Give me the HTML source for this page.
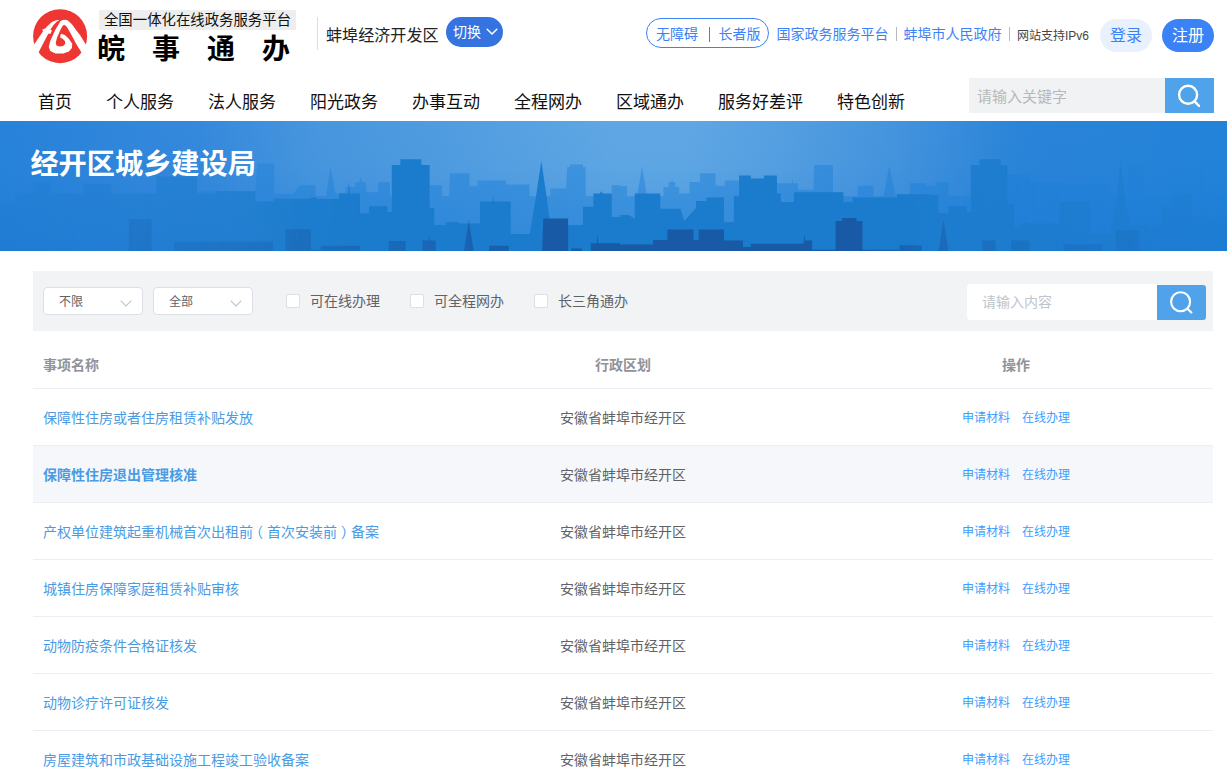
<!DOCTYPE html>
<html lang="zh-CN">
<head>
<meta charset="utf-8">
<title>经开区城乡建设局</title>
<style>
*{box-sizing:border-box;margin:0;padding:0}
html,body{width:1227px;height:776px;overflow:hidden;background:#fff}
body{font-family:"Liberation Sans","Noto Sans CJK SC",sans-serif;color:#333;position:relative}
.abs{position:absolute;white-space:nowrap}
a{text-decoration:none;color:inherit}

/* header */
#logo{left:30px;top:6px;width:60px;height:60px}
#slogan{left:99px;top:10px;width:197px;height:20px;background:#eee;font-size:14.4px;line-height:21px;color:#111;text-align:center}
#brand{left:97px;top:32px;font-size:28px;font-weight:700;line-height:36px;color:#000;letter-spacing:27px}
#vdiv{left:317px;top:17px;width:1px;height:33px;background:#ddd}
#area{left:326px;top:23px;font-size:16.1px;line-height:24px;color:#222}
#switch{left:446px;top:17px;width:57px;height:30px;border-radius:15px;background:#3573e0;color:#fff;font-size:14px;line-height:31px;padding-left:7px}
#acc{left:646px;top:18px;width:123px;height:30px;border:1px solid #3b82f6;border-radius:15px}
.acct{top:24px;font-size:14px;line-height:20px;color:#3b82f6}
#accbar{left:709px;top:27px;width:1px;height:15px;background:#3b82f6}
.tl{top:24px;font-size:14px;line-height:20px;color:#3b82f6}
#ipv6{left:1017px;top:26px;font-size:12px;line-height:20px;color:#444}
.sep{top:27px;width:1px;height:14px;background:#bbb}
#login{left:1100px;top:19px;width:52px;height:33px;border-radius:17px;background:#e8f1fd;color:#3b82f6;font-size:16px;line-height:34px;text-align:center}
#reg{left:1162px;top:19px;width:52px;height:33px;border-radius:17px;background:#3b82f6;color:#fff;font-size:16px;line-height:34px;text-align:center}
.nav{top:90px;font-size:17px;line-height:26px;color:#111}
#hs{left:969px;top:78px;width:196px;height:35px;background:#f1f2f3;color:#b8b8b8;font-size:15px;line-height:38px;padding-left:8px}
#hsb{left:1165px;top:78px;width:49px;height:35px;background:#4ea3ea}

/* banner */
#banner{left:0;top:121px;width:1227px;height:130px;background:linear-gradient(90deg,#1f7bd8 0%,#3d8fdc 30%,#5aa4e2 50%,#3f90dd 70%,#2380d8 100%);overflow:hidden}
#btitle{left:30.4px;top:144px;font-size:28.2px;font-weight:700;line-height:40px;color:#fff}

/* filter */
#filter{left:33px;top:271px;width:1180px;height:60px;background:#f2f3f5}
.sel{top:287px;width:100px;height:28px;background:#fff;border:1px solid #dcdfe6;border-radius:4px;font-size:12px;line-height:28px;color:#606266;padding-left:15px}
.cb{top:294px;width:14px;height:14px;background:#fff;border:1px solid #dcdfe6;border-radius:2px}
.cbl{top:291px;font-size:14px;line-height:20px;color:#606266}
#fs{left:967px;top:284px;width:190px;height:36px;background:#fff;border-radius:4px 0 0 4px;color:#c0c4cc;font-size:14px;line-height:37px;padding-left:15px}
#fsb{left:1157px;top:285px;width:49px;height:35px;background:#50a3ea;border-radius:0 3px 3px 0}

.chev{left:76px;top:12px}
/* table */
.th{top:355px;font-size:14px;font-weight:700;line-height:20px;color:#909399}
.row{left:33px;width:1180px;height:57px;border-top:1px solid #ebeef5}
.row.hov{background:#f5f7fa}
.c1{left:10px;top:19px;font-size:14px;line-height:20px;color:#4a9be3}
.c2{left:527px;top:19px;font-size:14px;line-height:20px;color:#606266}
.c3{left:929px;top:20px;font-size:12px;line-height:18px;color:#409eff}
.c4{left:989px;top:20px;font-size:12px;line-height:18px;color:#409eff}
</style>
</head>
<body>

<!-- HEADER -->
<svg id="logo" class="abs" viewBox="0 0 60 60" width="60" height="60">
<circle cx="30.1" cy="30.15" r="27" fill="#ee3632"/>
<g><g transform="translate(10,9) scale(0.051546)" fill="#fff">
<polygon points="352,97 300,105 230,135 160,200 100,262 38,285 62,312 -111,568 -170,660 -60,790 -21,712 160,362 205,362 232,295 200,285 262,195 330,125 374,100"/>
<polygon points="440,95 400,115 300,280 200,500 170,620 200,700 300,745 450,745 560,710 620,640 625,560 560,460 480,390 410,365 393,400 395,440 440,460 485,510 490,560 450,600 380,610 320,590 305,540 330,440 400,280 440,210 470,190 520,230 600,370 700,560 796,711 840,780 960,640 886,568 776,390 700,290 620,180 540,108 500,90"/>
</g></g>
</svg>
<div id="slogan" class="abs">全国一体化在线政务服务平台</div>
<div id="brand" class="abs">皖事通办</div>
<div id="vdiv" class="abs"></div>
<div id="area" class="abs">蚌埠经济开发区</div>
<div id="switch" class="abs">切换<svg class="abs" style="left:40px;top:11px" width="12" height="8" viewBox="0 0 12 8"><path d="M1.2 1.2 L6 6 L10.8 1.2" fill="none" stroke="#fff" stroke-width="1.5" stroke-linecap="round" stroke-linejoin="round"/></svg></div>
<div id="acc" class="abs"></div><a class="abs acct" style="left:656px">无障碍</a><div id="accbar" class="abs"></div><a class="abs acct" style="left:718.5px">长者版</a>
<a class="abs tl" style="left:776.5px">国家政务服务平台</a>
<div class="abs sep" style="left:896px"></div>
<a class="abs tl" style="left:903.5px">蚌埠市人民政府</a>
<div class="abs sep" style="left:1009px"></div>
<div id="ipv6" class="abs">网站支持IPv6</div>
<div id="login" class="abs">登录</div>
<div id="reg" class="abs">注册</div>

<a class="abs nav" style="left:38px">首页</a>
<a class="abs nav" style="left:106px">个人服务</a>
<a class="abs nav" style="left:208px">法人服务</a>
<a class="abs nav" style="left:310px">阳光政务</a>
<a class="abs nav" style="left:412px">办事互动</a>
<a class="abs nav" style="left:514px">全程网办</a>
<a class="abs nav" style="left:616px">区域通办</a>
<a class="abs nav" style="left:718px">服务好差评</a>
<a class="abs nav" style="left:837px">特色创新</a>
<div id="hs" class="abs">请输入关键字</div>
<div id="hsb" class="abs"><svg class="abs" style="left:0;top:0" width="49" height="35" viewBox="0 0 49 35"><circle cx="23.1" cy="16.8" r="9" fill="none" stroke="#fff" stroke-width="2.4"/><path d="M29.8 23.6 L34 27.9" stroke="#fff" stroke-width="2.4" stroke-linecap="round"/></svg></div>

<!-- BANNER -->
<div id="banner" class="abs"><svg class="abs" style="left:0;top:0" width="1227" height="130" viewBox="0 0 1227 130">
<defs>
<linearGradient id="sky" x1="0" y1="0" x2="1" y2="0">
<stop offset="0" stop-color="#2782d9"/><stop offset="0.163" stop-color="#3589dc"/><stop offset="0.26" stop-color="#4796de"/><stop offset="0.36" stop-color="#509ce0"/><stop offset="0.5" stop-color="#5fa7e4"/><stop offset="0.56" stop-color="#5fa7e4"/><stop offset="0.635" stop-color="#559fe1"/><stop offset="0.733" stop-color="#4393dd"/><stop offset="0.83" stop-color="#2a84d8"/><stop offset="1" stop-color="#2283d8"/>
</linearGradient>
<linearGradient id="vd" x1="0" y1="0" x2="0" y2="1">
<stop offset="0" stop-color="#1470cf" stop-opacity="0"/><stop offset="0.35" stop-color="#1470cf" stop-opacity="0.03"/><stop offset="1" stop-color="#1470cf" stop-opacity="0.3"/>
</linearGradient>
<linearGradient id="fade" x1="0" y1="0" x2="1" y2="0">
<stop offset="0" stop-color="#fff" stop-opacity="0.25"/><stop offset="0.12" stop-color="#fff" stop-opacity="0.45"/><stop offset="0.2" stop-color="#fff" stop-opacity="0.7"/><stop offset="0.25" stop-color="#fff" stop-opacity="0.95"/><stop offset="0.3" stop-color="#fff" stop-opacity="1"/><stop offset="0.73" stop-color="#fff" stop-opacity="1"/><stop offset="0.8" stop-color="#fff" stop-opacity="0.85"/><stop offset="0.86" stop-color="#fff" stop-opacity="0.7"/><stop offset="0.92" stop-color="#fff" stop-opacity="0.5"/><stop offset="1" stop-color="#fff" stop-opacity="0.25"/>
</linearGradient>
<linearGradient id="fade2" x1="0" y1="0" x2="1" y2="0">
<stop offset="0" stop-color="#fff" stop-opacity="0.12"/><stop offset="0.2" stop-color="#fff" stop-opacity="0.3"/><stop offset="0.25" stop-color="#fff" stop-opacity="0.4"/><stop offset="0.33" stop-color="#fff" stop-opacity="0.55"/><stop offset="0.4" stop-color="#fff" stop-opacity="0.8"/><stop offset="0.45" stop-color="#fff" stop-opacity="1"/><stop offset="0.7" stop-color="#fff" stop-opacity="1"/><stop offset="0.76" stop-color="#fff" stop-opacity="0.5"/><stop offset="0.85" stop-color="#fff" stop-opacity="0.25"/><stop offset="1" stop-color="#fff" stop-opacity="0.1"/>
</linearGradient>
<mask id="fm2"><rect width="1227" height="130" fill="url(#fade2)"/></mask>
<mask id="fm"><rect width="1227" height="130" fill="url(#fade)"/></mask>
</defs>
<rect width="1227" height="130" fill="url(#sky)"/><rect width="1227" height="130" fill="url(#vd)"/>
<g mask="url(#fm)">
<path fill="#1a7fd8" fill-opacity="0.45" d="M0.0,131 L0.0,80.4 L15.2,80.4 L15.2,72.8 L32.8,72.8 L32.8,63.2 L50.5,63.2 L50.5,72.8 L83.4,72.8 L83.4,64.0 L111.2,64.0 L111.2,72.8 L156.6,72.8 L156.6,72.8 L197.1,72.8 L197.1,70.3 L255.2,70.3 L257.7,42.5 L274.1,42.5 L274.1,72.8 L293.1,72.8 L300.0,64.3 L315.6,64.3 L315.6,75.2 L326.1,75.2 L326.1,75.2 L330.5,45.3 L335.2,72.6 L335.2,72.6 L345.6,72.6 L345.6,66.1 L347.7,66.1 L348.3,62.2 L349.6,66.1 L349.6,66.1 L355.3,66.1 L355.3,60.9 L359.5,60.9 L360.5,55.7 L361.6,60.9 L361.6,60.9 L365.7,60.9 L366.5,71.3 L378.2,71.3 L378.2,60.9 L390.0,60.9 L390.0,75.2 L429.6,75.2 L429.6,64.3 L442.1,64.3 L442.1,75.2 L449.2,75.2 L450.0,52.3 L469.5,52.3 L469.5,65.3 L477.4,65.3 L477.4,59.6 L506.1,59.6 L506.1,63.5 L529.5,63.5 L529.5,75.2 L550.4,75.2 L550.4,67.4 L566.0,67.4 L567.3,46.0 L570.0,46.0 L570.0,43.4 L583.0,43.4 L583.0,46.0 L585.6,46.0 L585.6,75.2 L611.7,75.2 L611.7,64.3 L620.0,64.3 L620.0,65.3 L627.0,65.3 L627.0,75.2 L637.4,75.2 L637.4,73.2 L642.1,45.3 L646.5,73.2 L646.5,75.2 L663.5,75.2 L663.5,66.1 L668.7,66.1 L668.7,60.9 L671.6,60.9 L672.1,56.5 L672.6,60.9 L672.6,60.9 L675.2,60.9 L675.2,66.1 L679.1,66.1 L679.1,72.6 L689.6,72.6 L689.6,60.9 L700.0,60.9 L700.0,52.3 L715.6,52.3 L715.6,64.8 L724.8,64.8 L724.8,59.6 L739.1,59.6 L739.1,75.2 L776.9,75.2 L776.9,62.2 L792.1,62.2 L792.6,57.0 L793.1,62.2 L793.1,62.2 L797.8,62.2 L797.8,68.7 L813.4,68.7 L814.2,43.9 L833.0,43.9 L833.0,75.2 L857.8,75.2 L857.8,64.8 L873.4,64.8 L873.4,75.2 L883.9,75.2 L883.9,73.9 L889.1,45.3 L895.6,73.9 L895.6,75.2 L909.9,75.2 L909.9,62.2 L925.6,62.2 L925.6,62.2 L925.6,62.2 L925.6,64.8 L935.7,64.8 L935.7,60.9 L948.7,60.9 L948.7,75.2 L970.9,75.2 L1007.4,53.1 L1029.6,53.1 L1029.6,60.9 L1063.5,60.9 L1063.5,63.5 L1110.4,63.5 L1110.4,75.2 L1128.7,75.2 L1128.7,45.3 L1144.4,45.3 L1144.4,75.2 L1170.4,75.2 L1170.4,62.2 L1183.5,62.2 L1183.5,75.2 L1199.1,75.2 L1199.1,45.3 L1204.3,45.3 L1204.3,75.2 L1227.0,75.2 L1227.0,131Z"/>
<path fill="#1b7bcc" d="M0.0,131 L0.0,82.9 L15.2,82.9 L15.2,72.8 L32.8,72.8 L32.8,61.4 L50.5,61.4 L50.5,72.8 L83.4,72.8 L83.4,63.2 L111.2,63.2 L111.2,72.8 L156.6,72.8 L156.6,55.6 L197.1,55.6 L197.1,72.8 L214.8,72.8 L214.8,70.3 L255.2,70.3 L255.2,80.4 L274.1,80.4 L274.1,77.8 L310.0,77.8 L310.4,76.6 L317.0,76.6 L317.0,77.9 L339.1,77.9 L339.1,72.6 L348.3,72.6 L349.0,62.2 L350.1,72.6 L350.1,72.6 L360.0,72.6 L360.0,92.2 L369.1,92.2 L369.1,85.2 L387.4,85.2 L387.4,90.9 L391.8,90.9 L391.8,43.9 L400.4,43.9 L400.4,38.2 L421.3,38.2 L421.3,43.9 L429.6,43.9 L429.6,87.0 L434.3,87.0 L434.3,103.9 L446.1,103.9 L446.1,101.3 L459.1,101.3 L459.1,102.6 L480.0,102.6 L480.0,80.5 L492.5,80.5 L493.0,73.9 L493.8,80.5 L493.8,80.5 L510.7,80.5 L510.7,113.1 L529.5,113.1 L529.5,114.4 L536.0,75.2 L541.3,40.0 L546.5,75.2 L551.7,114.4 L551.7,103.9 L583.0,103.9 L583.0,85.7 L593.4,85.7 L593.4,72.6 L599.9,72.6 L601.3,70.0 L602.6,72.6 L602.6,72.6 L611.7,72.6 L611.7,96.1 L620.0,96.1 L620.0,77.9 L620.0,77.9 L620.0,97.4 L620.4,94.0 L628.3,94.0 L634.8,97.4 L634.8,72.6 L660.3,72.6 L660.3,87.8 L680.4,87.8 L684.3,100.0 L696.1,87.0 L696.1,79.9 L706.5,79.9 L706.5,76.6 L724.0,76.6 L724.0,101.3 L733.9,101.3 L733.9,75.2 L739.1,75.2 L739.1,54.4 L750.8,54.4 L750.8,57.5 L763.9,57.5 L763.9,54.4 L776.9,54.4 L776.9,72.6 L780.8,72.6 L780.8,81.0 L793.9,81.0 L793.9,71.3 L843.4,71.3 L843.4,81.0 L852.6,81.0 L852.6,76.6 L896.9,76.6 L896.9,73.2 L930.0,73.2 L930.0,73.9 L930.0,73.9 L930.0,62.2 L930.0,73.9 L930.0,73.9 L938.3,73.9 L938.3,92.2 L948.7,92.2 L948.7,85.2 L967.0,85.2 L967.0,90.9 L970.9,90.9 L970.9,43.9 L979.5,43.9 L979.5,38.2 L1000.9,38.2 L1000.9,43.9 L1007.4,43.9 L1007.4,83.1 L1013.9,83.1 L1013.9,106.5 L1019.2,106.5 L1019.2,102.6 L1059.6,102.6 L1059.6,80.5 L1089.6,80.5 L1089.6,113.1 L1110.4,113.1 L1110.4,114.4 L1117.0,75.2 L1120.4,40.0 L1124.8,75.2 L1131.3,114.4 L1131.3,103.9 L1162.6,103.9 L1162.6,85.7 L1173.0,85.7 L1173.0,72.6 L1191.3,72.6 L1191.3,96.1 L1227.0,96.1 L1227.0,131Z"/>
</g><g mask="url(#fm2)"><path fill="#185aa6" d="M0.0,131 L0.0,133.4 L128.9,133.4 L128.9,98.1 L151.6,98.1 L151.6,133.4 L174.3,133.4 L174.3,120.8 L272.9,120.8 L272.9,133.4 L285.5,133.4 L285.5,108.2 L310.0,108.2 L310.0,113.1 L310.0,108.6 L310.0,108.6 L311.0,113.1 L311.0,128.7 L320.9,128.7 L320.9,124.8 L360.0,124.8 L360.0,132.6 L388.7,132.6 L388.7,120.1 L405.6,120.1 L405.6,132.6 L422.6,132.6 L422.6,119.6 L428.3,119.6 L429.1,114.4 L429.9,119.6 L429.9,119.6 L435.6,119.6 L435.6,132.6 L463.8,132.6 L464.3,128.7 L468.8,98.7 L473.4,128.7 L473.4,132.6 L489.1,132.6 L489.1,124.8 L508.7,124.8 L508.7,132.6 L542.0,132.6 L543.3,97.4 L568.1,97.4 L568.1,132.6 L571.3,132.6 L571.3,127.4 L581.7,127.4 L581.7,132.6 L590.8,132.6 L590.8,122.2 L596.8,122.2 L597.3,113.1 L598.1,122.2 L598.1,122.2 L620.0,122.2 L620.0,123.5 L653.0,123.5 L653.0,119.1 L667.4,119.1 L667.4,108.6 L693.5,108.6 L693.5,119.1 L698.7,119.1 L698.7,108.6 L724.0,108.6 L724.0,119.6 L743.0,119.6 L743.0,126.1 L750.8,126.1 L750.8,122.7 L803.5,122.7 L804.3,113.8 L805.1,119.6 L805.1,119.6 L812.1,119.6 L812.1,128.7 L835.6,128.7 L835.6,100.0 L842.1,100.0 L842.1,96.9 L856.5,96.9 L856.5,100.0 L862.5,100.0 L862.5,128.7 L899.5,128.7 L899.5,124.3 L921.7,124.3 L921.7,132.6 L930.0,132.6 L930.0,124.8 L930.0,124.8 L930.0,132.6 L938.3,132.6 L938.8,128.7 L943.5,98.7 L948.2,128.7 L948.2,132.6 L982.6,132.6 L982.6,119.6 L995.7,119.6 L995.7,132.6 L1011.3,132.6 L1011.3,119.6 L1029.6,119.6 L1029.6,132.6 L1063.5,132.6 L1063.5,123.5 L1102.6,123.5 L1102.6,132.6 L1115.7,132.6 L1115.7,109.2 L1139.1,109.2 L1139.1,132.6 L1227.0,132.6 L1227.0,131Z"/>
</g>
</svg></div>
<div id="btitle" class="abs">经开区城乡建设局</div>

<!-- FILTER -->
<div id="filter" class="abs"></div>
<div class="abs sel" style="left:43px">不限<svg class="abs chev" width="12" height="7" viewBox="0 0 12 7"><path d="M0.7 0.7 L6 6 L11.3 0.7" fill="none" stroke="#c0c4cc" stroke-width="1.1"/></svg></div>
<div class="abs sel" style="left:153px">全部<svg class="abs chev" width="12" height="7" viewBox="0 0 12 7"><path d="M0.7 0.7 L6 6 L11.3 0.7" fill="none" stroke="#c0c4cc" stroke-width="1.1"/></svg></div>
<div class="abs cb" style="left:286px"></div><div class="abs cbl" style="left:310px">可在线办理</div>
<div class="abs cb" style="left:410px"></div><div class="abs cbl" style="left:434px">可全程网办</div>
<div class="abs cb" style="left:534px"></div><div class="abs cbl" style="left:558px">长三角通办</div>
<div id="fs" class="abs">请输入内容</div>
<div id="fsb" class="abs"><svg class="abs" style="left:0;top:0" width="49" height="35" viewBox="0 0 49 35"><circle cx="23.6" cy="16.8" r="9.5" fill="none" stroke="#fff" stroke-width="2.1"/><path d="M30.6 23.9 L34.4 27.6" stroke="#fff" stroke-width="2.1" stroke-linecap="round"/></svg></div>

<!-- TABLE -->
<div class="abs th" style="left:43px">事项名称</div>
<div class="abs th" style="left:595px">行政区划</div>
<div class="abs th" style="left:1002px">操作</div>

<div class="abs row" style="top:388px"><a class="abs c1">保障性住房或者住房租赁补贴发放</a><span class="abs c2">安徽省蚌埠市经开区</span><a class="abs c3">申请材料</a><a class="abs c4">在线办理</a></div>
<div class="abs row hov" style="top:445px"><a class="abs c1" style="font-weight:700">保障性住房退出管理核准</a><span class="abs c2">安徽省蚌埠市经开区</span><a class="abs c3">申请材料</a><a class="abs c4">在线办理</a></div>
<div class="abs row" style="top:502px"><a class="abs c1">产权单位建筑起重机械首次出租前<span style="position:relative;left:-4px">（</span>首次安装前<span style="position:relative;left:4px">）</span>备案</a><span class="abs c2">安徽省蚌埠市经开区</span><a class="abs c3">申请材料</a><a class="abs c4">在线办理</a></div>
<div class="abs row" style="top:559px"><a class="abs c1">城镇住房保障家庭租赁补贴审核</a><span class="abs c2">安徽省蚌埠市经开区</span><a class="abs c3">申请材料</a><a class="abs c4">在线办理</a></div>
<div class="abs row" style="top:616px"><a class="abs c1">动物防疫条件合格证核发</a><span class="abs c2">安徽省蚌埠市经开区</span><a class="abs c3">申请材料</a><a class="abs c4">在线办理</a></div>
<div class="abs row" style="top:673px"><a class="abs c1">动物诊疗许可证核发</a><span class="abs c2">安徽省蚌埠市经开区</span><a class="abs c3">申请材料</a><a class="abs c4">在线办理</a></div>
<div class="abs row" style="top:730px"><a class="abs c1">房屋建筑和市政基础设施工程竣工验收备案</a><span class="abs c2">安徽省蚌埠市经开区</span><a class="abs c3">申请材料</a><a class="abs c4">在线办理</a></div>

</body>
</html>
